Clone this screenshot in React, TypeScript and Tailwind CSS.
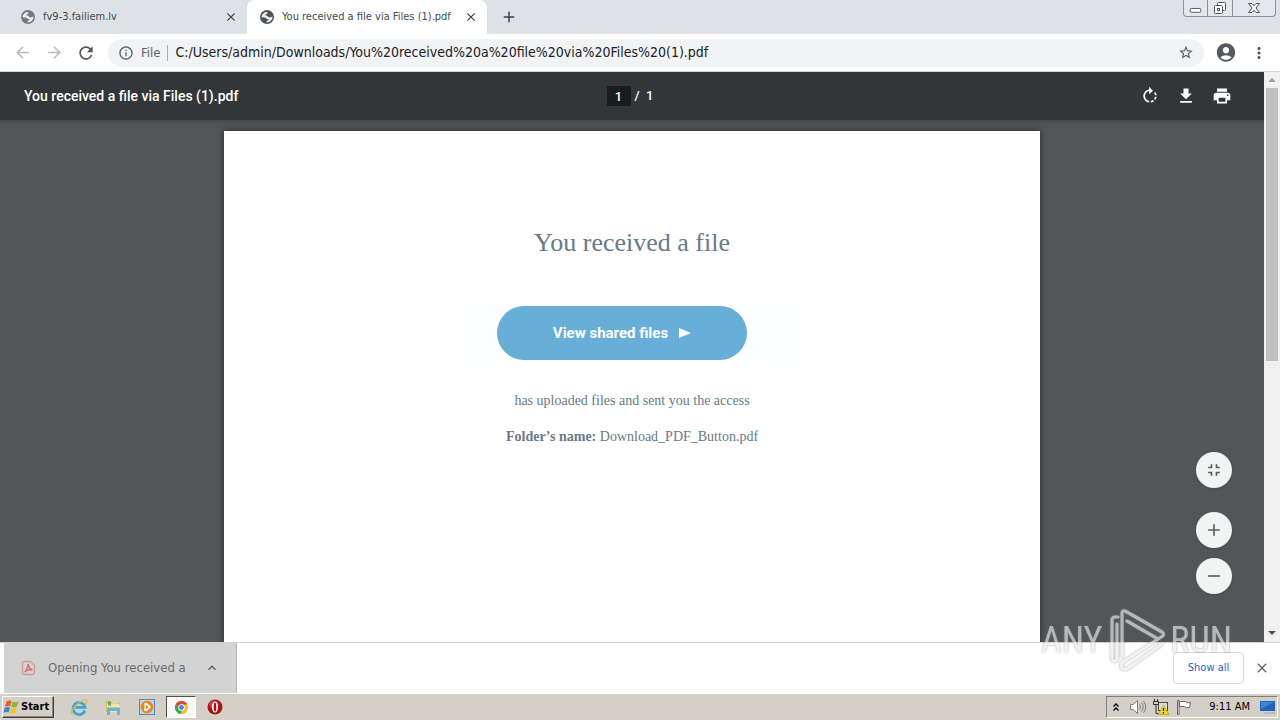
import type { ReactNode } from "react";
import {
  MdAccountCircle,
  MdAdd,
  MdArrowBack,
  MdArrowForward,
  MdClose,
  MdExpandLess,
  MdFileDownload,
  MdFullscreenExit,
  MdInfoOutline,
  MdMoreVert,
  MdPrint,
  MdRefresh,
  MdRemove,
  MdRotateRight,
  MdStarBorder,
} from "react-icons/md";

function IconButton({ label, className = "", children }: { label: string; className?: string; children: ReactNode }) {
  return (
    <button type="button" aria-label={label} className={`flex shrink-0 items-center justify-center ${className}`}>
      {children}
    </button>
  );
}

function Globe({ className = "" }: { className?: string }) {
  return (
    <svg viewBox="0 0 16 16" className={`size-4 shrink-0 ${className}`}>
      <circle cx="8" cy="8" r="7" fill="currentColor" />
      <path
        d="M2.600 8.200Q2.800 5.200 5.300 3.400L8.200 3q.8 1.400-.6 1.900L6.200 5.800q.2 1 2 1l1.300 1.400h1.800q1.200-.2 2.200-1 .3 3-1.900 4.900-1.800 1.600-4.300 1.400.2-1.500 1.500-1.900.9-.5.6-1.500-2.300.3-2.700-1.300-2-.6-4.100-.6z"
        fill="#eceef0"
      />
    </svg>
  );
}

function TabStrip() {
  return (
    <div className="flex h-[34px] shrink-0 items-start bg-[#dee1e6] text-[11px] text-[#45494d]">
      <div className="flex h-full w-[247px] items-center pr-2 pl-5">
        <Globe className="text-[#76797d]" />
        <span className="ml-[7px] flex-1 truncate">fv9-3.failiem.lv</span>
        <IconButton label="Close tab" className="size-4">
          <MdClose className="size-[14px] text-[#3c4043]" />
        </IconButton>
      </div>
      <div className="flex h-full w-60 items-center rounded-t-lg bg-white pr-2 pl-3">
        <Globe className="text-[#505458]" />
        <span className="ml-[7px] flex-1 whitespace-nowrap">You received a file via Files (1).pdf</span>
        <IconButton label="Close tab" className="size-4">
          <MdClose className="size-[14px] text-[#3c4043]" />
        </IconButton>
      </div>
      <IconButton label="New tab" className="ml-3 h-full w-5">
        <MdAdd className="size-[18px] text-[#3c4043]" />
      </IconButton>
      <div className="mr-1 ml-auto flex h-[17px] divide-x divide-[#8c9097] rounded-b border border-t-0 border-[#8c9097] bg-[#e4e7ec]">
        <IconButton label="Minimize" className="w-6">
          <svg viewBox="0 0 24 16" className="h-4 w-6" fill="#fff" stroke="#50545a">
            <rect x="6.500" y="8.500" width="11" height="4" rx="1" />
          </svg>
        </IconButton>
        <IconButton label="Restore" className="w-[25px]">
          <svg viewBox="0 0 24 16" className="h-4 w-6" fill="#fff" stroke="#50545a">
            <rect x="9.500" y="2.500" width="8" height="8" rx="1" />
            <rect x="6.500" y="5.500" width="8" height="8" rx="1" />
            <rect x="9.500" y="8.500" width="2" height="2" />
          </svg>
        </IconButton>
        <IconButton label="Close window" className="w-[42px]">
          <svg viewBox="0 0 24 16" className="h-4 w-6" fill="#fff" stroke="#50545a">
            <path d="M6.500 3.500h3.500l2 2.300 2-2.300h3.500l-3.500 4.500 3.500 4.500h-3.500l-2-2.300-2 2.300H6.500L10 8z" />
          </svg>
        </IconButton>
      </div>
    </div>
  );
}

function AddressBar() {
  return (
    <div className="flex h-[38px] shrink-0 items-center border-b border-[#d5d8db] bg-white pr-[11px]">
      <IconButton label="Back" className="ml-3 size-5">
        <MdArrowBack className="size-[19px] text-[#b9bbbe]" />
      </IconButton>
      <IconButton label="Forward" className="ml-3 size-5">
        <MdArrowForward className="size-[19px] text-[#b9bbbe]" />
      </IconButton>
      <IconButton label="Reload" className="ml-3 size-5">
        <MdRefresh className="size-5 text-[#505458]" />
      </IconButton>
      <div className="ml-3 flex h-7 flex-1 items-center rounded-full bg-[#f1f3f4] px-[10px] text-[14px]">
        <MdInfoOutline className="size-4 shrink-0 text-[#5f6368]" />
        <label htmlFor="address" className="ml-[7px] text-[13px] text-[#5f6368]">
          File
        </label>
        <span className="mx-[7px] h-4 w-px bg-[#a9acb0]" />
        <input
          id="address"
          type="text"
          defaultValue="C:/Users/admin/Downloads/You%20received%20a%20file%20via%20Files%20(1).pdf"
          className="min-w-0 flex-1 bg-transparent text-[#202124] outline-none"
        />
        <IconButton label="Bookmark this page" className="size-4">
          <MdStarBorder className="size-[17px] text-[#505458]" />
        </IconButton>
      </div>
      <IconButton label="Profile" className="ml-[11px] size-[22px]">
        <MdAccountCircle className="size-[23px] text-[#55595e]" />
      </IconButton>
      <IconButton label="Menu" className="ml-3 size-5">
        <MdMoreVert className="size-[18px] text-[#505458]" />
      </IconButton>
    </div>
  );
}

function DocumentBar() {
  return (
    <div className="grid h-12 shrink-0 grid-cols-[1fr_auto_1fr] items-center bg-[#323639] px-6 font-[Roboto,sans-serif] text-[14px] font-medium text-white">
      <h1>You received a file via Files (1).pdf</h1>
      <div className="flex items-center gap-1 pr-1 text-[13px]">
        <input aria-label="Page number" type="text" defaultValue="1" className="h-5 w-6 bg-[#191b1c] text-center outline-none" />
        <span className="whitespace-pre">/  1</span>
      </div>
      <div className="flex justify-end gap-4 pr-2">
        <IconButton label="Rotate clockwise" className="size-5">
          <MdRotateRight className="size-5" />
        </IconButton>
        <IconButton label="Download" className="size-5">
          <MdFileDownload className="size-5" />
        </IconButton>
        <IconButton label="Print" className="size-5">
          <MdPrint className="size-5" />
        </IconButton>
      </div>
    </div>
  );
}

function Viewer() {
  return (
    <div className="flex min-h-0 flex-1">
      <main className="relative flex min-w-0 flex-1 flex-col overflow-hidden bg-[#525659]">
        <DocumentBar />
        <div className="flex min-h-0 flex-1 flex-col items-center pt-[11px] shadow-[inset_0_4px_4px_-3px_#404447]">
          <article className="flex w-full max-w-[816px] flex-1 flex-col items-center bg-white pt-24 font-['Liberation_Serif',serif] text-[14px] leading-4 text-[#677a87] shadow-[0_0_6px_1px_#303336]">
            <h2 className="text-[26px] leading-8">You received a file</h2>
            <div className="mt-[46px] flex h-[61px] w-[336px] bg-[#fcfeff] pl-[33px]">
              <a
                href="#shared"
                className="mt-px flex h-[54px] w-[250px] items-center justify-center gap-[11px] rounded-full bg-[#67aed8] font-[Roboto,sans-serif] text-[15px] font-bold text-white"
              >
                View shared files
                <svg viewBox="0 0 12 10" className="h-[10px] w-3" fill="currentColor">
                  <path d="M0 0l12 5-12 5z" />
                </svg>
              </a>
            </div>
            <p className="mt-[27px]">has uploaded files and sent you the access</p>
            <p className="mt-5">
              <strong>Folder’s name:</strong> Download_PDF_Button.pdf
            </p>
          </article>
        </div>
        <div className="absolute right-8 bottom-12 flex flex-col gap-[10px] text-[#5a5d60]">
          <IconButton label="Fit to page" className="mb-[14px] size-9 rounded-full bg-[#f2f3f3] shadow-sm">
            <MdFullscreenExit className="size-5" />
          </IconButton>
          <IconButton label="Zoom in" className="size-9 rounded-full bg-[#f2f3f3] shadow-sm">
            <MdAdd className="size-5" />
          </IconButton>
          <IconButton label="Zoom out" className="size-9 rounded-full bg-[#f2f3f3] shadow-sm">
            <MdRemove className="size-5" />
          </IconButton>
        </div>
      </main>
      <div className="flex w-4 shrink-0 flex-col items-center bg-[#f1f1f1]">
        <IconButton label="Scroll up" className="h-4 w-full">
          <svg viewBox="0 0 8 4" className="h-1 w-2" fill="#a3a3a3">
            <path d="M4 0l4 4H0z" />
          </svg>
        </IconButton>
        <div className="flex w-full flex-1 flex-col px-0.5">
          <div className="h-[51%] bg-[#c1c1c1]" />
        </div>
        <IconButton label="Scroll down" className="h-[18px] w-full">
          <svg viewBox="0 0 8 4" className="h-1 w-2" fill="#505050">
            <path d="M0 0h8L4 4z" />
          </svg>
        </IconButton>
      </div>
    </div>
  );
}

function Watermark() {
  return (
    <div className="pointer-events-none absolute right-12 bottom-12 flex h-16 items-center font-['Roboto_Condensed','Open_Sans_Condensed',Roboto,sans-serif] text-[36px] leading-none text-[#ececec] opacity-65 drop-shadow-[0_0_1px_#7d7d7d]">
      <span>ANY</span>
      <svg viewBox="0 0 56 64" className="mr-1 ml-2 h-16 w-14" fill="none" stroke="currentColor" strokeWidth="3.200" strokeLinejoin="round" strokeLinecap="round">
        <path d="M8 9H5q-3 0-3 3v38q0 4 5 2.500V16" />
        <path d="M12 48V5q0-3.500 4-1.500L52 24q3 2 0 4.500L48 31 17 13" />
        <path d="M48 31L13 54q-3 3-1 6 2 2.500 6 0l34-24" />
      </svg>
      <span>RUN</span>
    </div>
  );
}

function DownloadShelf() {
  return (
    <div className="flex h-[51px] shrink-0 items-center border-t border-[#d0d2d4] bg-white pr-2 pl-1">
      <div className="flex h-full w-[233px] items-center border-r border-[#b5b5b5] bg-[#d3d3d3] pr-4 pl-4">
        <svg viewBox="0 0 16 16" className="size-4 shrink-0" fill="none" stroke="#d39a98" strokeWidth="1.300">
          <path d="M4 1.500h6.500l4 4V12q0 2.500-2.500 2.500H4Q2.500 14.500 2.500 13V3q0-1.500 1.500-1.500z" />
          <path d="M4.500 12q3-2 3.500-8 1 5 4.500 6Q8 9 4.500 12z" stroke="#cf6f6c" />
        </svg>
        <span className="ml-3 flex-1 truncate text-[13px] text-[#6a6a6a]">Opening You received a</span>
        <IconButton label="Download options" className="size-4">
          <MdExpandLess className="size-[18px] text-[#5f6368]" />
        </IconButton>
      </div>
      <button type="button" className="mr-2 ml-auto h-8 w-[71px] rounded border border-[#d5d8dc] text-[11px] text-[#1967c4]">
        Show all
      </button>
      <IconButton label="Close downloads bar" className="size-5">
        <MdClose className="size-4 text-[#5f6368]" />
      </IconButton>
    </div>
  );
}

function WindowsFlag() {
  return (
    <svg viewBox="0 0 18 16" className="h-4 w-[18px]">
      <path d="M3.500 2.500Q6 .8 8.500 2L7.300 7.300Q4.800 6.300 2 7.800z" fill="#e9602c" />
      <path d="M9.500 2.400Q12.500 4 15.500 2.300L14 7.800Q11 9.200 8.300 7.700z" fill="#86b93b" />
      <path d="M1.800 8.700Q4.500 7.300 7 8.300L5.700 13.500Q3.200 12.300.5 13.800z" fill="#3b83d1" />
      <path d="M8 8.700Q10.700 10.300 13.800 8.700L12.300 14Q9.500 15.400 6.700 13.900z" fill="#f4c22d" />
    </svg>
  );
}

function Taskbar() {
  return (
    <footer className="flex h-[27px] shrink-0 items-center border-t border-white bg-[#d4d0c8] px-0.5 text-[11px] text-black">
      <button
        type="button"
        className="flex h-[22px] w-[52px] shrink-0 items-center border border-t-white border-r-[#404040] border-b-[#404040] border-l-white font-bold shadow-[inset_-1px_-1px_#8b8880]"
      >
        <WindowsFlag />
        Start
      </button>
      <nav aria-label="Quick launch" className="ml-[10px] flex items-center gap-1">
        <IconButton label="Internet Explorer" className="h-[22px] w-[30px]">
          <svg viewBox="0 0 18 18" className="size-[18px]" fill="none">
            <path d="M14.800 12.500A6 6 0 1 1 15 9.300H5.500" stroke="#39a5dc" strokeWidth="2.800" />
            <path d="M2.500 16.500Q-.5 14.500 5.500 8t11-6q1.500 1-1.500 5" stroke="#e3b73c" strokeWidth="1.300" />
          </svg>
        </IconButton>
        <IconButton label="File Explorer" className="h-[22px] w-[30px]">
          <svg viewBox="0 0 18 18" className="size-[18px]">
            <path d="M2 3h5l1 2h8v9H2z" fill="#d9bb62" />
            <path d="M3 5.500h11l2 1.500v7H3z" fill="#f6e3a0" />
            <path d="M4 3.500h3v4H4z" fill="#6fa957" />
            <path d="M3 9.500h13V17h-3v-4H6v4H3z" fill="#67b5df" />
          </svg>
        </IconButton>
        <IconButton label="Media Player" className="h-[22px] w-[30px]">
          <svg viewBox="0 0 18 18" className="size-[18px]">
            <rect x="1.500" y="1.500" width="15" height="15" fill="#b9d5ec" stroke="#558cba" />
            <circle cx="9" cy="9" r="6.300" fill="#ef8717" />
            <path d="M6.500 5h2.500l4 4-4 4H6.500z" fill="#fff" />
            <path d="M8 7l2.500 2L8 11z" fill="#e5740c" />
          </svg>
        </IconButton>
        <IconButton
          label="Chrome"
          className="h-[22px] w-[30px] border border-t-[#505050] border-r-white border-b-white border-l-[#505050] bg-[#f8f8f6]"
        >
          <svg viewBox="0 0 16 16" className="size-[15px]">
            <circle cx="8" cy="8" r="7" fill="#f1c232" />
            <path d="M1.900 4.500A7 7 0 0 1 14.200 4.800H8L5 9.500z" fill="#db4437" />
            <path d="M1.900 4.500L5.200 10l3 1.500L7.500 15A7 7 0 0 1 1.900 4.500z" fill="#3aa757" />
            <circle cx="8" cy="8" r="3.400" fill="#fff" />
            <circle cx="8" cy="8" r="2.600" fill="#4285f4" />
          </svg>
        </IconButton>
        <IconButton label="Opera" className="h-[22px] w-[30px]">
          <svg viewBox="0 0 16 16" className="size-4">
            <ellipse cx="8" cy="8" rx="7.500" ry="7.500" fill="#a91219" />
            <ellipse cx="7" cy="5.500" rx="5" ry="4" fill="#cf3b40" />
            <ellipse cx="8" cy="8" rx="3" ry="5.500" fill="#fff" />
            <ellipse cx="8" cy="8" rx="1.300" ry="4.500" fill="#a91219" />
          </svg>
        </IconButton>
      </nav>
      <div className="ml-auto flex h-[22px] w-[172px] items-center border border-t-[#808080] border-r-white border-b-white border-l-[#808080] pr-px pl-1">
        <IconButton label="Show hidden icons" className="h-4 w-[10px]">
          <svg viewBox="0 0 8 10" className="h-[10px] w-2" fill="none" stroke="#000" strokeWidth="1.300">
            <path d="M1.500 4.500L4 2l2.500 2.500M1.500 8.500L4 6l2.500 2.500" />
          </svg>
        </IconButton>
        <svg viewBox="0 0 18 16" className="ml-2 h-4 w-[18px]" fill="none" stroke="#7e7e7e">
          <path d="M1.500 5.500h3l4-4v13l-4-4h-3z" fill="#fff" />
          <path d="M10.500 5.500q2 2.500 0 5M12.500 3.500q3.500 4.500 0 9M14.500 2q4.500 6 0 12" />
        </svg>
        <svg viewBox="0 0 18 18" className="ml-[5px] size-[18px]" fill="none">
          <rect x="6.500" y="4.500" width="9" height="8" fill="#ddd" stroke="#4c4c4c" />
          <path d="M2.500 1v3M5.500 1v3M1.500 3.500h5v3h-5zM4 7v8.500h6" stroke="#333" />
          <path d="M11.500 7l5.500 9.500H6z" fill="#f8d21c" stroke="#aa9117" strokeWidth=".6" />
          <path d="M11.500 10v3M11.500 14v1.500" stroke="#222" strokeWidth="1.200" />
        </svg>
        <svg viewBox="0 0 18 16" className="ml-[5px] h-4 w-[18px]" fill="#fff" stroke="#666">
          <path d="M2.500 15.500v-14h1.500v14zM4.500 2.500h6q1 2 5 1l-1 5q-3 1-5-1h-5z" />
        </svg>
        <time className="mr-2 ml-auto whitespace-nowrap">9:11 AM</time>
        <IconButton label="Show desktop" className="size-[18px]">
          <svg viewBox="0 0 18 18" className="size-[18px]">
            <path d="M2 3h15v10H2z" fill="#2363b9" />
            <path d="M3 4h13L3 11z" fill="#3f86d8" />
            <path d="M6 14h11v2H6z" fill="#b2bcc7" />
          </svg>
        </IconButton>
      </div>
    </footer>
  );
}

export default function App() {
  return (
    <div className="relative flex h-screen flex-col overflow-hidden bg-white font-['DejaVu_Sans_Condensed','Noto_Sans',sans-serif]">
      <TabStrip />
      <AddressBar />
      <Viewer />
      <DownloadShelf />
      <Taskbar />
      <Watermark />
    </div>
  );
}
